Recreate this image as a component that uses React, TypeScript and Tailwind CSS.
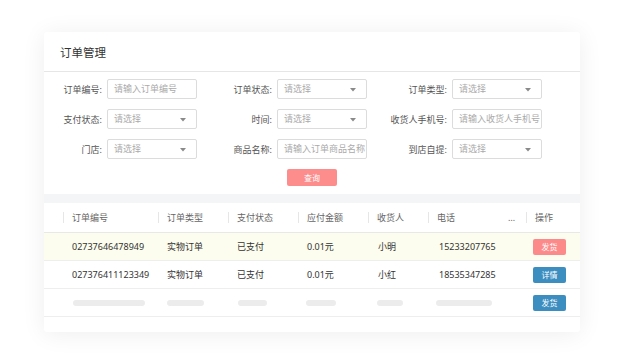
import React from "react";

const font = { fontFamily: '"Noto Sans", "Noto Sans CJK SC", sans-serif' };

function Caret() {
  return (
    <svg width="6" height="4" viewBox="0 0 6 4" className="absolute right-[10px] top-[8px]">
      <path d="M0 0 L6 0 L3 3.5 Z" fill="#8a8a8a" />
    </svg>
  );
}

function Field({ label, labelW, placeholder, select }: { label: string; labelW: string; placeholder: string; select?: boolean }) {
  return (
    <div className="flex items-center">
      <div className={`${labelW} text-right pr-[5px] text-[9px] text-[#555] leading-none whitespace-nowrap`}>{label}:</div>
      <div className="relative w-[90px] h-[20px] border border-[#dcdcdc] rounded-[2px] bg-white flex items-center pl-[6px] text-[9px] text-[#aaa] overflow-hidden whitespace-nowrap">
        {placeholder}
        {select && <Caret />}
      </div>
    </div>
  );
}

function HeadCell({ text, dots }: { text: string; dots?: boolean }) {
  return (
    <div className="flex items-center h-full">
      <span className="w-px h-[11px] bg-[#e6e6e6]" />
      <span className="ml-[8px] text-[9px] text-[#666]">{text}</span>
      {dots && <span className="ml-auto mr-[11px] text-[9px] text-[#666]">…</span>}
    </div>
  );
}

function Btn({ text, color }: { text: string; color: string }) {
  return (
    <div className={`w-[33px] h-[16px] rounded-[2px] ${color} text-white text-[8px] flex items-center justify-center`}>{text}</div>
  );
}

function Bar({ w }: { w: string }) {
  return <div className={`${w} h-[6px] rounded-full bg-[#ececec]`} />;
}

export default function App() {
  const cols = "grid grid-cols-[19px_95px_70px_70px_70px_60px_98px_54px]";
  return (
    <div className="w-[641px] h-[361px] bg-white pt-[32px] pl-[44px]" style={font}>
      <div className="w-[536px] h-[300px] bg-white rounded-[3px] shadow-[0_2px_24px_rgba(0,0,0,0.07)] flex flex-col overflow-hidden">
        <div className="h-[40px] border-b border-[#e6e6e6] flex items-center pl-[16px] pt-[2px] text-[11.5px] text-[#333]">订单管理</div>
        <div className="pt-[7px] pb-[8px] flex flex-col items-center">
          <div className="w-full flex flex-col gap-[10px]">
            <div className="flex">
              <div className="w-[153px]"><Field label="订单编号" labelW="w-[63px]" placeholder="请输入订单编号" /></div>
              <div className="w-[170px]"><Field label="订单状态" labelW="w-[80px]" placeholder="请选择" select /></div>
              <div className="w-[175px]"><Field label="订单类型" labelW="w-[85px]" placeholder="请选择" select /></div>
            </div>
            <div className="flex">
              <div className="w-[153px]"><Field label="支付状态" labelW="w-[63px]" placeholder="请选择" select /></div>
              <div className="w-[170px]"><Field label="时间" labelW="w-[80px]" placeholder="请选择" select /></div>
              <div className="w-[175px]"><Field label="收货人手机号" labelW="w-[85px]" placeholder="请输入收货人手机号" /></div>
            </div>
            <div className="flex">
              <div className="w-[153px]"><Field label="门店" labelW="w-[63px]" placeholder="请选择" select /></div>
              <div className="w-[170px]"><Field label="商品名称" labelW="w-[80px]" placeholder="请输入订单商品名称" /></div>
              <div className="w-[175px]"><Field label="到店自提" labelW="w-[85px]" placeholder="请选择" select /></div>
            </div>
          </div>
          <div className="mt-[10px] w-[50px] h-[17px] rounded-[2px] bg-[#fd8c8c] text-white text-[8px] flex items-center justify-center">查询</div>
        </div>
        <div className="h-[9px] bg-[#f4f5f7]" />
        <div className={`${cols} h-[30px] border-b border-[#e8e8e8]`}>
          <div />
          <HeadCell text="订单编号" />
          <HeadCell text="订单类型" />
          <HeadCell text="支付状态" />
          <HeadCell text="应付金额" />
          <HeadCell text="收货人" />
          <HeadCell text="电话" dots />
          <HeadCell text="操作" />
        </div>
        <div className={`${cols} h-[28px] items-center bg-[#fcfdee] border-b border-[#eeeeee] text-[9px] text-[#333]`}>
          <div />
          <div className="pl-[9px]">02737646478949</div>
          <div className="pl-[9px]">实物订单</div>
          <div className="pl-[9px]">已支付</div>
          <div className="pl-[9px]">0.01元</div>
          <div className="pl-[10px]">小明</div>
          <div className="pl-[11px]">15233207765</div>
          <div className="pl-[7px]"><Btn text="发货" color="bg-[#fd8a8a]" /></div>
        </div>
        <div className={`${cols} h-[28px] items-center border-b border-[#eeeeee] text-[9px] text-[#333]`}>
          <div />
          <div className="pl-[9px]">027376411123349</div>
          <div className="pl-[9px]">实物订单</div>
          <div className="pl-[9px]">已支付</div>
          <div className="pl-[9px]">0.01元</div>
          <div className="pl-[10px]">小红</div>
          <div className="pl-[11px]">18535347285</div>
          <div className="pl-[7px]"><Btn text="详情" color="bg-[#3c8dc0]" /></div>
        </div>
        <div className={`${cols} h-[28px] items-center border-b border-[#eeeeee]`}>
          <div />
          <div className="pl-[10px]"><Bar w="w-[72px]" /></div>
          <div className="pl-[9px]"><Bar w="w-[37px]" /></div>
          <div className="pl-[10px]"><Bar w="w-[29px]" /></div>
          <div className="pl-[8px]"><Bar w="w-[30px]" /></div>
          <div className="pl-[9px]"><Bar w="w-[26px]" /></div>
          <div className="pl-[8px]"><Bar w="w-[56px]" /></div>
          <div className="pl-[7px]"><Btn text="发货" color="bg-[#3c8dc0]" /></div>
        </div>
      </div>
    </div>
  );
}
